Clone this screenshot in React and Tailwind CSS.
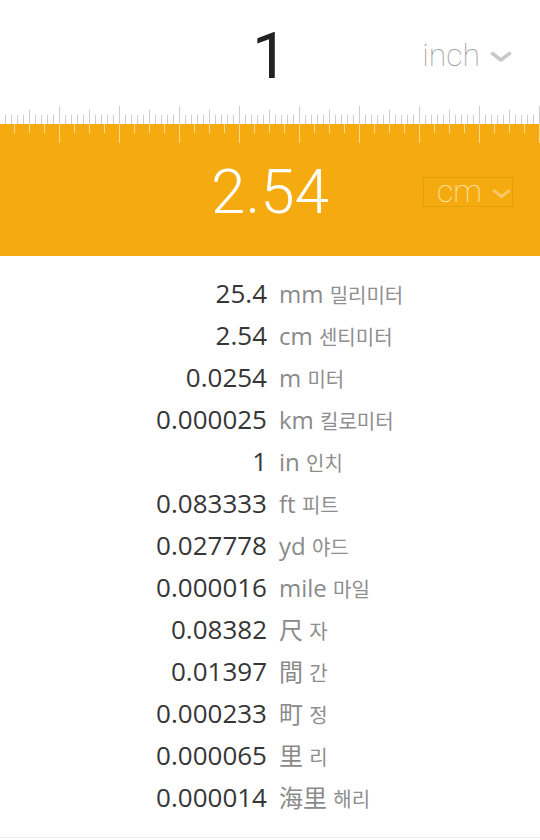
import React from 'react';

const ROWS = [
    ['25.4', 'mm', '밀리미터'],
    ['2.54', 'cm', '센티미터'],
    ['0.0254', 'm', '미터'],
    ['0.000025', 'km', '킬로미터'],
    ['1', 'in', '인치'],
    ['0.083333', 'ft', '피트'],
    ['0.027778', 'yd', '야드'],
    ['0.000016', 'mile', '마일'],
    ['0.08382', '尺', '자'],
    ['0.01397', '間', '간'],
    ['0.000233', '町', '정'],
    ['0.000065', '里', '리'],
    ['0.000014', '海里', '해리'],
];

const TOP_TICKS = Array.from({ length: 90 }, (_, i) => i + 1);
const BOTTOM_TICKS = Array.from({ length: 36 }, (_, i) => i + 1);

const Chevron = ({ className, width, height }) => (
    <svg width={width} height={height} viewBox="0 0 22 11" className={className}>
        <path d="M2.5 2.5 L11 9 L19.5 2.5" fill="none" stroke="currentColor" strokeWidth="3.5" strokeLinecap="round" strokeLinejoin="round" />
    </svg>
);

const TopRuler = () => (
    <svg width="540" height="20" className="block">
        {TOP_TICKS.map((k) => {
            const x = 6 * k - 1 + 0.5;
            const y1 = k % 10 === 0 ? 2 : k % 10 === 5 ? 6 : 11;
            return <line key={k} x1={x} x2={x} y1={y1} y2={20} stroke="#cdcdcd" strokeWidth="1" />;
        })}
    </svg>
);

const BottomRuler = () => (
    <svg width="540" height="20" className="absolute left-0 top-0 block">
        {BOTTOM_TICKS.map((j) => {
            const x = 15 * j - 1 + 0.5;
            const y2 = j % 4 === 0 ? 19 : 9;
            return <line key={j} x1={x} x2={x} y1={0} y2={y2} stroke="#fbd98e" strokeWidth="1" />;
        })}
    </svg>
);

const App = () => {
    return (
        <div className="w-[540px] h-[840px] bg-white overflow-hidden font-['Open_Sans','Noto_Sans_CJK_KR',sans-serif]">
            {/* input */}
            <div className="grid grid-cols-[1fr_auto_1fr] items-center h-[104px] pt-[10px]">
                <div />
                <div className="font-['Roboto',sans-serif] text-[64px] leading-none text-[#222]">1</div>
                <div className="flex items-center justify-end pr-[28px] gap-[10px] pb-[4px]">
                    <span className="font-['Roboto',sans-serif] font-thin text-[32px] leading-none text-[#9a9a9a]">inch</span>
                    <Chevron width={22} height={11} className="text-[#c8c8c8] mt-[2px]" />
                </div>
            </div>
            <TopRuler />

            {/* result */}
            <div className="relative grid grid-cols-[1fr_auto_1fr] items-center h-[132px] bg-[#f5ab0f] pt-[4px]">
                <BottomRuler />
                <div />
                <div className="font-['Roboto',sans-serif] font-light text-[62px] leading-none text-white">2.54</div>
                <div className="flex justify-end pr-[27px]">
                    <div className="flex items-center justify-between w-[90px] h-[30px] border border-[#e69f0c] pl-[13px] pr-[1px]">
                        <span className="font-['Roboto',sans-serif] font-thin text-[32px] leading-none text-[#fde8b6] -mt-[3px]">cm</span>
                        <Chevron width={19} height={11} className="text-[#f9c866] mt-[3px]" />
                    </div>
                </div>
            </div>

            {/* list */}
            <div className="pt-[13px] pb-[22px] border-b border-[#ececec]">
                {ROWS.map(([num, unit, ko]) => (
                    <div key={unit} className="flex items-baseline h-[42px] pt-[5px]">
                        <span className="w-[267px] text-right text-[26px] text-[#363636]">{num}</span>
                        <span className="pl-[12px] text-[24px] text-[#8a8a8a]">
                            {unit} <span className="text-[20px] text-[#8e8e8e]">{ko}</span>
                        </span>
                    </div>
                ))}
            </div>
        </div>
    );
};

export default App;
